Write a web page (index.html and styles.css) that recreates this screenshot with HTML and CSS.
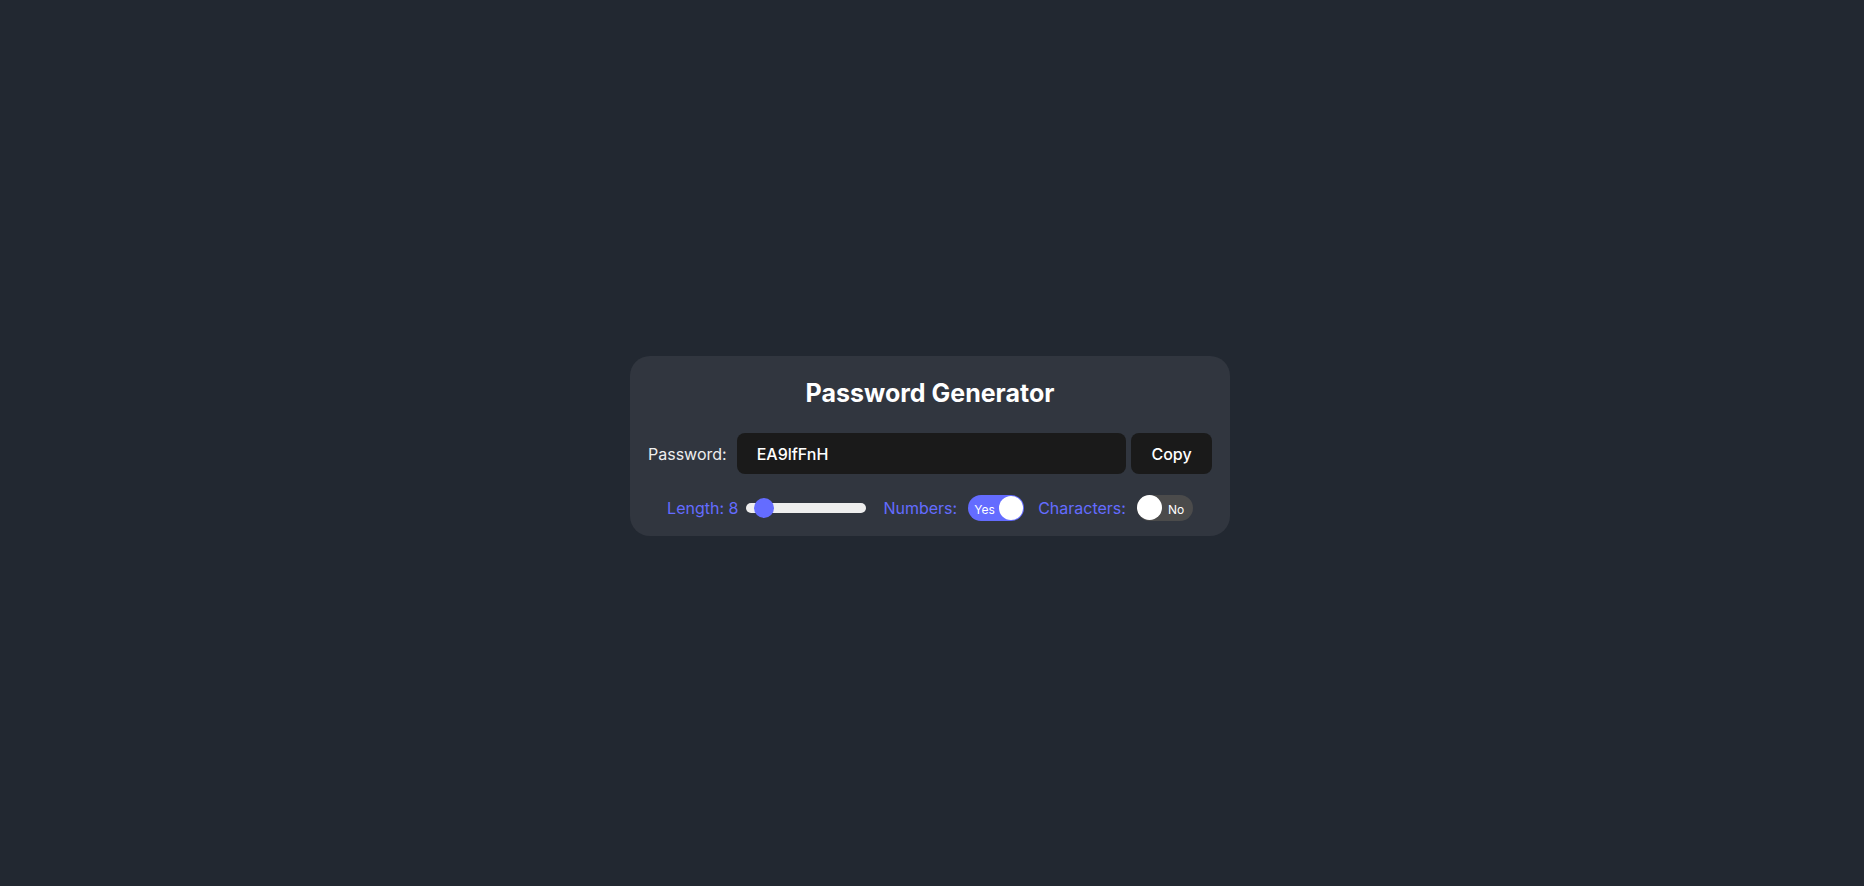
FILE: index.html
```html
<!DOCTYPE html>
<html lang="en">
<head>
<meta charset="utf-8">
<title>Password Generator</title>
<link rel="stylesheet" href="styles.css">
</head>
<body>
<main class="card">
  <h1 class="title">Password Generator</h1>
  <div class="pw-row">
    <label class="pw-label" for="pw">Password:</label>
    <input id="pw" class="pw-input" type="text" value="EA9lfFnH" readonly>
    <button class="copy-btn" type="button">Copy</button>
  </div>
  <div class="options">
    <div class="opt opt-length">
      <span class="opt-label">Length: 8</span>
      <div class="slider"><span class="slider-thumb"></span></div>
    </div>
    <div class="opt opt-numbers">
      <span class="opt-label">Numbers:</span>
      <div class="toggle on"><span class="toggle-text">Yes</span><span class="knob"></span></div>
    </div>
    <div class="opt opt-chars">
      <span class="opt-label">Characters:</span>
      <div class="toggle off"><span class="knob"></span><span class="toggle-text">No</span></div>
    </div>
  </div>
</main>
</body>
</html>
```
FILE: styles.css
```css
* { box-sizing: border-box; }
html, body { height: 100%; }
body {
  margin: 0;
  background: #222831;
  font-family: Inter, "Noto Sans", sans-serif;
  color: #eeeeee;
  display: flex;
  align-items: center;
  justify-content: center;
  padding: 6px 4px 0 0;
}
.card {
  width: 600px;
  background: #31363f;
  border-radius: 20px;
  padding: 22px 18px 15px 18px;
  display: flex;
  flex-direction: column;
}
.title {
  margin: 0 0 25px;
  font-size: 25px;
  line-height: 30px;
  font-weight: 700;
  text-align: center;
  color: #ffffff;
}
.pw-row {
  display: flex;
  align-items: center;
  height: 41px;
}
.pw-label {
  font-size: 16px;
  color: #eeeeee;
  margin-right: 10px;
}
.pw-input {
  flex: 1;
  height: 41px;
  background: #1a1a1a;
  border: 1px solid transparent;
  border-radius: 8px;
  padding: 0 19px;
  font-family: Inter, "Noto Sans", sans-serif;
  font-size: 16px;
  font-weight: 500;
  color: #ffffff;
  outline: none;
}
.copy-btn {
  margin-left: 5px;
  width: 81px;
  height: 41px;
  background: #1a1a1a;
  border: 1px solid transparent;
  border-radius: 8px;
  font-family: Inter, "Noto Sans", sans-serif;
  font-size: 16px;
  font-weight: 500;
  color: #ffffff;
  padding: 0;
}
.options {
  margin-top: 20px;
  height: 27px;
  display: flex;
  align-items: center;
  justify-content: center;
}
.opt { display: flex; align-items: center; }
.opt-label { font-size: 16px; color: #646cff; }
.opt-numbers { margin-left: 17px; }
.opt-chars { margin-left: 14px; }
.slider {
  position: relative;
  margin-left: 8px;
  width: 120px;
  height: 10px;
  border-radius: 5px;
  background: #eeeeee;
}
.slider-thumb {
  position: absolute;
  left: 8px;
  top: -5px;
  width: 20px;
  height: 20px;
  border-radius: 50%;
  background: #646cff;
}
.toggle {
  margin-left: 11px;
  width: 56px;
  height: 26px;
  border-radius: 13px;
  display: flex;
  align-items: center;
  padding: 1px;
}
.toggle.on { background: #646cff; justify-content: space-between; padding-left: 6px; }
.toggle.off { background: #4b4b4b; padding-left: 0; }
.knob {
  width: 24px;
  height: 24px;
  border-radius: 50%;
  background: #ffffff;
}
.toggle.off .knob { width: 25px; height: 25px; }
.toggle-text { font-size: 12px; color: #ffffff; padding-top: 4px; }
.toggle.off .toggle-text { margin-left: 6px; }
```
